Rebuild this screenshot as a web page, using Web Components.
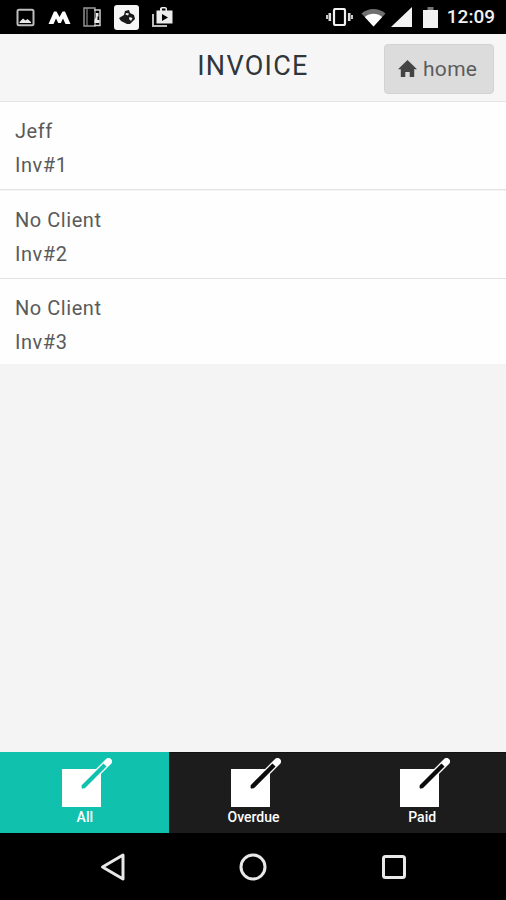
<!DOCTYPE html>
<html>
<head>
<meta charset="utf-8">
<title>Invoice</title>
<style>
  html, body { margin: 0; padding: 0; height: 100%; background: #f4f4f4; }
  body { font-family: Roboto, "Liberation Sans", sans-serif; }
  invoice-app { height: 900px; }
</style>
</head>
<body>
<invoice-app>
  <status-bar slot="status"></status-bar>
  <app-header slot="header" title="INVOICE">home</app-header>
  <invoice-row name="Jeff" number="Inv#1"></invoice-row>
  <invoice-row name="No Client" number="Inv#2"></invoice-row>
  <invoice-row name="No Client" number="Inv#3"></invoice-row>
  <tab-bar slot="tabs">
    <tab-item active>All</tab-item>
    <tab-item>Overdue</tab-item>
    <tab-item>Paid</tab-item>
  </tab-bar>
  <nav-bar slot="nav"></nav-bar>
</invoice-app>

<script>
class InvoiceApp extends HTMLElement {
  constructor() {
    super();
    this.attachShadow({ mode: "open" }).innerHTML = `
      <style>
        :host { display: flex; flex-direction: column; width: 506px; background: #f4f4f4; overflow: hidden; }
        main { flex: 1; display: flex; flex-direction: column; min-height: 0; }
      </style>
      <slot name="status"></slot>
      <slot name="header"></slot>
      <main><slot></slot></main>
      <slot name="tabs"></slot>
      <slot name="nav"></slot>
    `;
  }
}

class StatusBar extends HTMLElement {
  constructor() {
    super();
    this.attachShadow({ mode: "open" }).innerHTML = `
      <style>
        :host { display: flex; align-items: center; justify-content: space-between; height: 34px; background: #000; color: #f2f2f2; padding: 0 11px 0 16px; box-sizing: border-box; }
        .group { display: flex; align-items: center; }
        .left { gap: 12px; }
        svg { display: block; }
        .vib { margin-right: 8px; }
        .wifi { margin-right: 5px; }
        .sig { margin-right: 11px; }
        .bat { margin-right: 9px; }
        .time { font: 500 19px/34px Roboto, "Liberation Sans", sans-serif; }
      </style>
      <div class="group left">
        <svg width="19" height="19" viewBox="0 0 19 19"><rect x="1.500" y="1.800" width="16" height="15.400" rx="1.500" fill="none" stroke="#bdbdbd" stroke-width="2"/><path d="M3.500 14 7 10.500l2.500 2 2-1.500 3.500 3v1h-11.500z" fill="#e8e8e8"/></svg>
        <svg width="23" height="15" viewBox="0 0 23 15" style="margin-left:1px"><path d="M.5 14 6 1.500h2.500L11.500 7 14.500 1.500h2.500L22.500 14h-5L15 8.500 12.800 13h-2.600L8 8.500 5.500 14z" fill="#fff"/></svg>
        <svg width="19" height="22" viewBox="0 0 19 22"><path d="M1 2h11v18H1z" fill="none" stroke="#9c9c9c" stroke-width="1.400"/><path d="M4 2v18" stroke="#8a8a8a" stroke-width="1.200"/><path d="M11 4h6v15.500h-6" fill="none" stroke="#d0d0d0" stroke-width="1.500"/><path d="M13 7h2.500v3.500h-1V14h2v3h-5v-3l1.500-3z" fill="#ececec"/></svg>
        <svg width="25" height="25" viewBox="0 0 25 25"><rect width="25" height="25" rx="3" fill="#f6f6f6"/><path d="M5 13l5-3 1-4 4-1 1 3 4 2 1 4-5 5-3 0-6-3z" fill="#1a1a1a"/><path d="M12 8l3 .5-1 2-2.500-1zM15.500 12l3 1-1.500 3-2-2z" fill="#f6f6f6"/></svg>
        <svg width="23" height="22" viewBox="0 0 23 22"><path d="M2 8v12h14" fill="none" stroke="#bdbdbd" stroke-width="2"/><path d="M5.500 4.500h3.500V2.500a2 2 0 0 1 2-1.500h3a2 2 0 0 1 2 1.500v2h5.500v13h-16z" fill="#ececec"/><path d="M11 8l6 3.500-6 3.500z" fill="#000"/><rect x="11" y="2.500" width="3.500" height="2" fill="#000"/></svg>
      </div>
      <div class="group">
        <svg class="vib" width="27" height="18" viewBox="0 0 27 18"><rect x="8" y="1" width="11" height="16" rx="1.500" fill="none" stroke="#f2f2f2" stroke-width="2.200"/><path d="M3.800 5v8M23.200 5v8" stroke="#dedede" stroke-width="2.600"/><path d="M1 7v4M26 7v4" stroke="#c8c8c8" stroke-width="2"/></svg>
        <svg class="wifi" width="25" height="19" viewBox="0 0 25 19"><path d="M.5 5.500C7 -.5 18 -.5 24.500 5.500L12.500 18.500z" fill="#707070"/><path d="M3.800 9C9 4.800 16 4.800 21.200 9L12.500 18.500z" fill="#fff"/></svg>
        <svg class="sig" width="21" height="20" viewBox="0 0 21 20"><path d="M21 0v20H0z" fill="#f2f2f2"/></svg>
        <svg class="bat" width="15" height="21" viewBox="0 0 15 21"><path d="M4.500 0h6v3H4.500z" fill="#777"/><path d="M0 3h15v18H0z" fill="#f2f2f2"/></svg>
        <span class="time">12:09</span>
      </div>
    `;
  }
}

class AppHeader extends HTMLElement {
  constructor() {
    super();
    const title = this.getAttribute("title");
    this.attachShadow({ mode: "open" }).innerHTML = `
      <style>
        :host { display: block; position: relative; height: 68px; background: #f6f6f6; border-bottom: 1px solid #e6e6e6; box-sizing: border-box; }
        h1 { margin: 0; font: 400 27px/65px Roboto, "Liberation Sans", sans-serif; color: #30373b; text-align: center; letter-spacing: 1.300px; }
        button { position: absolute; top: 10px; right: 12px; width: 110px; height: 50px; box-sizing: border-box; padding: 0 0 0 13px; display: flex; align-items: center; gap: 6px; background: #dcdcdc; border: 1px solid #d2d2d2; border-radius: 4px; color: #5c5c5c; font: 400 21px Roboto, "Liberation Sans", sans-serif; letter-spacing: .3px; }
        svg { display: block; margin-top: -2px; }
      </style>
      <h1>${title}</h1>
      <button>
        <svg width="19" height="17" viewBox="0 0 19 17"><path d="M9.500 0 19 9.200h-2.800V17h-4.500v-5H7.300v5H2.800V9.200H0z" fill="#444"/></svg>
        <slot></slot>
      </button>
    `;
  }
}

class InvoiceRow extends HTMLElement {
  constructor() {
    super();
    this.attachShadow({ mode: "open" }).innerHTML = `
      <style>
        :host { display: block; height: 88px; margin-bottom: .5px; box-sizing: border-box; padding: 12px 15px 0; background: #fefefe; border-bottom: 1px solid #e2e2e2; color: #5a5a5a; font: 400 20px/34px Roboto, "Liberation Sans", sans-serif; letter-spacing: .55px; }
        :host(:last-of-type) { border-bottom: 0; height: 85px; margin-bottom: 0; }
      </style>
      <div>${this.getAttribute("name")}</div>
      <div>${this.getAttribute("number")}</div>
    `;
  }
}

class TabBar extends HTMLElement {
  constructor() {
    super();
    this.attachShadow({ mode: "open" }).innerHTML = `
      <style>
        :host { display: grid; grid-template-columns: repeat(3, 1fr); height: 81px; background: #1c1c1c; }
      </style>
      <slot></slot>
    `;
  }
}

class TabItem extends HTMLElement {
  constructor() {
    super();
    const active = this.hasAttribute("active");
    const core = active ? "#10c2ae" : "#0c0c0c";
    this.attachShadow({ mode: "open" }).innerHTML = `
      <style>
        :host { display: flex; flex-direction: column; align-items: center; box-sizing: border-box; padding-top: 6px; color: #fff; font: 500 14px/18px Roboto, "Liberation Sans", sans-serif; }
        :host([active]) { background: #10c2ae; }
        :host(:not([active])) { border-top: 1px solid #111; padding-top: 5px; }
        svg { display: block; margin-left: 6px; }
        span { padding-left: 1px; }
      </style>
      <svg width="50" height="50" viewBox="0 0 50 50">
        <rect x="0" y="11" width="39" height="38" fill="#fff"/>
        <path d="M34 16 46.500 3.500" stroke="#fff" stroke-width="7" stroke-linecap="round"/>
        <path d="M21 29 43 7" stroke="${core}" stroke-width="4.500"/>
        <path d="M20 30 22 28" stroke="${core}" stroke-width="2.500"/>
      </svg>
      <span><slot></slot></span>
    `;
  }
}

class NavBar extends HTMLElement {
  constructor() {
    super();
    this.attachShadow({ mode: "open" }).innerHTML = `
      <style>
        :host { display: grid; grid-template-columns: repeat(3, 141px); justify-content: center; height: 67px; background: #000; align-items: center; justify-items: center; }
        svg { display: block; }
      </style>
      <svg width="28" height="30" viewBox="0 0 28 30" style="margin-left:2px"><path d="M24 3 3.500 15 24 27z" fill="none" stroke="#e8e8e8" stroke-width="3" stroke-linejoin="round"/></svg>
      <svg width="30" height="30" viewBox="0 0 30 30"><circle cx="15" cy="15" r="12" fill="none" stroke="#e8e8e8" stroke-width="3"/></svg>
      <svg width="26" height="26" viewBox="0 0 26 26"><rect x="2.500" y="2.500" width="21" height="21" rx="2" fill="none" stroke="#e8e8e8" stroke-width="3"/></svg>
    `;
  }
}

customElements.define("invoice-app", InvoiceApp);
customElements.define("status-bar", StatusBar);
customElements.define("app-header", AppHeader);
customElements.define("invoice-row", InvoiceRow);
customElements.define("tab-bar", TabBar);
customElements.define("tab-item", TabItem);
customElements.define("nav-bar", NavBar);
</script>
</body>
</html>
